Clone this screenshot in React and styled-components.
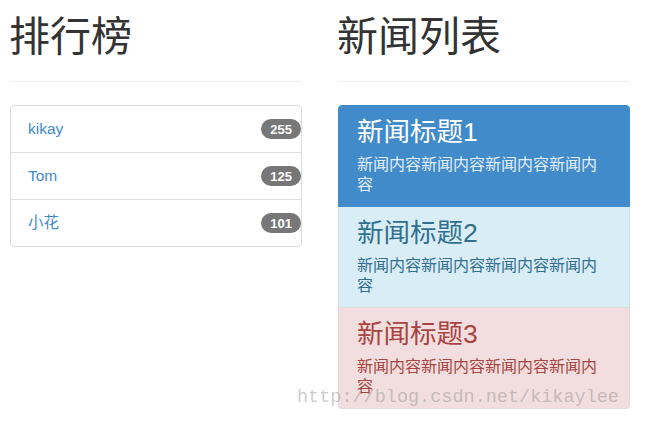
import React from "react";
import styled, { createGlobalStyle } from "styled-components";

const GlobalStyle = createGlobalStyle`
  * { box-sizing: border-box; }
  body {
    margin: 0;
    background: #fff;
    color: #333;
    font-family: "Liberation Sans", Arial, "Noto Sans CJK SC", sans-serif;
  }
`;

const Page = styled.div`
  position: relative;
  display: flex;
  gap: 36px;
  padding-left: 10px;
  width: 654px;
  height: 430px;
  overflow: hidden;
`;

const Column = styled.div`
  width: 292px;
  display: flex;
  flex-direction: column;
`;

const Title = styled.h1`
  margin: 11px 0 0 -1px;
  font-family: "Noto Sans CJK SC", sans-serif;
  font-size: 41px;
  font-weight: 400;
  line-height: 45px;
  color: #333;
`;

const Rule = styled.hr`
  margin: 25px 0 23px;
  border: 0;
  border-top: 1px solid #eee;
`;

const List = styled.div`
  display: flex;
  flex-direction: column;
`;

const RankItem = styled.div`
  display: flex;
  align-items: center;
  justify-content: space-between;
  padding: 12px 0 12px 17px;
  line-height: 22px;
  font-size: 15.5px;
  border: 1px solid #ddd;
  margin-bottom: -1px;
  background: #fff;

  &:first-child {
    border-top-left-radius: 4px;
    border-top-right-radius: 4px;
  }
  &:last-child {
    border-bottom-left-radius: 4px;
    border-bottom-right-radius: 4px;
  }
`;

const Name = styled.a`
  color: #428bca;
  text-decoration: none;
`;

const Badge = styled.span`
  display: inline-block;
  padding: 3.5px 9px;
  font-size: 13px;
  font-weight: 700;
  line-height: 13px;
  color: #fff;
  background: #777;
  border-radius: 11px;
`;

const tones = {
  active: { bg: "#428bca", border: "#428bca", head: "#fff", text: "#e1edf7" },
  info: { bg: "#d9edf7", border: "#ddd", head: "#31708f", text: "#31708f" },
  danger: { bg: "#f2dede", border: "#ddd", head: "#a94442", text: "#a94442" },
};

const NewsItem = styled.div`
  padding: 12px 20px 11px 18px;
  border: 1px solid ${(p) => tones[p.$tone].border};
  background: ${(p) => tones[p.$tone].bg};
  margin-bottom: -1px;
  position: relative;
  z-index: ${(p) => (p.$tone === "active" ? 2 : 1)};

  &:first-child {
    border-top-left-radius: 4px;
    border-top-right-radius: 4px;
  }
  &:last-child {
    border-bottom-left-radius: 4px;
    border-bottom-right-radius: 4px;
  }
`;

const NewsHeading = styled.h3`
  margin: 0 0 8px;
  font-size: 26.5px;
  font-weight: 400;
  line-height: 29px;
  color: ${(p) => tones[p.$tone].head};
`;

const NewsText = styled.p`
  margin: 0;
  font-size: 16px;
  line-height: 20px;
  color: ${(p) => tones[p.$tone].text};
`;

const Watermark = styled.div`
  position: absolute;
  left: 297px;
  top: 383px;
  font-family: "Liberation Mono", "Courier New", monospace;
  font-size: 18.5px;
  line-height: 30px;
  color: rgba(140, 140, 140, 0.45);
  pointer-events: none;
  z-index: 5;
`;

const ranks = [
  { name: "kikay", score: 255 },
  { name: "Tom", score: 125 },
  { name: "小花", score: 101 },
];

const news = [
  { title: "新闻标题1", tone: "active" },
  { title: "新闻标题2", tone: "info" },
  { title: "新闻标题3", tone: "danger" },
];

export default function App() {
  return (
    <>
      <GlobalStyle />
      <Page>
        <Column>
          <Title>排行榜</Title>
          <Rule />
          <List>
            {ranks.map((r) => (
              <RankItem key={r.name}>
                <Name href="#">{r.name}</Name>
                <Badge>{r.score}</Badge>
              </RankItem>
            ))}
          </List>
        </Column>
        <Column>
          <Title>新闻列表</Title>
          <Rule />
          <List>
            {news.map((n) => (
              <NewsItem key={n.title} $tone={n.tone}>
                <NewsHeading $tone={n.tone}>{n.title}</NewsHeading>
                <NewsText $tone={n.tone}>新闻内容新闻内容新闻内容新闻内容</NewsText>
              </NewsItem>
            ))}
          </List>
        </Column>
        <Watermark>http://blog.csdn.net/kikaylee</Watermark>
      </Page>
    </>
  );
}
